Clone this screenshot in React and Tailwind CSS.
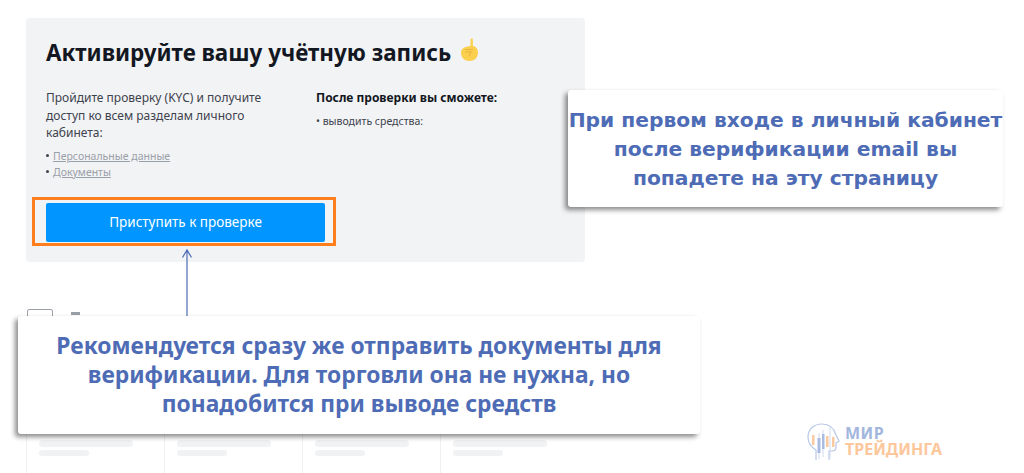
function Callout ({className, children}) {
	return (
		<div className={"absolute flex flex-col items-center justify-center whitespace-nowrap rounded-[3px] bg-white text-[#4e6cb5] font-bold shadow-[-3px_3px_5px_rgba(0,0,0,0.45)] " + className}>
			{children}
		</div>
	);
}

function PointingHand () {
	return (
		<svg width="19" height="24" viewBox="0 0 19 24" className="ml-[9px] mt-[-5px]">
			<path d="M10.500 1.500c0-1.500 2.400-1.500 2.400 0V8c3 .8 5.100 2.500 5.100 6.500 0 5-3.500 8.500-8.500 8.500S1 19.500 1 14.500C1 10.500 5 8.500 10.500 8z" fill="#fbd04f" />
			<path d="M5 11.500h8M5.500 14h6M11 13.500l-2 5" stroke="#e5a93a" strokeWidth="0.8" fill="none" />
		</svg>
	);
}

function Logo () {
	return (
		<div className="absolute left-[807px] top-[423px] flex items-center gap-[5px] font-['Noto_Sans',sans-serif]">
			<svg width="33" height="38" viewBox="0 0 33 38" fill="none">
				<path d="M9 37V27C4 24 1 20 1 14 1 6 7 1 15 1c7 0 12 4 14 11l3 6-3 2v5c0 2-2 3-5 3h-2v9" stroke="#b9c8e6" strokeWidth="1.200" />
				<path d="M12 10v26M16 7v27M23 4v31" stroke="#cfd9ee" strokeWidth="1" />
				<rect x="5" y="12" width="2.500" height="10" fill="#fbc9a0" />
				<rect x="10.500" y="15" width="3" height="15" fill="#a9bbe0" />
				<rect x="15" y="11" width="2.500" height="15" fill="#a9bbe0" />
				<rect x="19" y="13" width="2.500" height="11" fill="#fbc9a0" />
				<rect x="25" y="14" width="2.500" height="10" fill="#fbc9a0" />
			</svg>
			<div className="flex flex-col font-bold leading-[16px] mt-[-2px]">
				<span className="text-[16px] tracking-[0.5px] text-[#a3b6de]">МИР</span>
				<span className="text-[16px] text-[#fcc79c]">ТРЕЙДИНГА</span>
			</div>
		</div>
	);
}

function SkeletonCol () {
	return (
		<div className="w-[138px] h-[60px] border-l border-[#eef0f2] pl-[12px] pt-[6px]">
			<div className="w-[94px] h-[7px] rounded-full bg-[#f1f2f4]"></div>
			<div className="w-[50px] h-[6px] mt-[3px] rounded-full bg-[#f1f2f4]"></div>
		</div>
	);
}

export default function App () {
	return (
		<div className="relative w-[1024px] h-[473px] overflow-hidden bg-white pt-[18px] pl-[26px] font-['Noto_Sans',sans-serif] text-[#131722]">
			<section className="w-[559px] h-[244px] rounded-[4px] bg-[#f2f3f5] pl-[20px] pt-[18px]">
				<h1 className="flex items-center h-[33px] text-[22.400px] font-bold leading-[33px]">
					Активируйте вашу учётную запись
					<PointingHand />
				</h1>
				<div className="flex mt-[20px]">
					<div className="w-[270px]">
						<p className="w-[225px] text-[12px] leading-[17.500px] text-[#3d424d]">
							Пройдите проверку (KYC) и получите доступ ко всем разделам личного кабинета:
						</p>
						<ul className="mt-[6px] text-[10.500px] leading-[16px] text-[#9aa0a8]">
							<li className="flex items-center gap-[3px]"><span className="w-[3px] h-[3px] rounded-full bg-[#3d424d]"></span><span className="underline ml-[1px]">Персональные данные</span></li>
							<li className="flex items-center gap-[3px]"><span className="w-[3px] h-[3px] rounded-full bg-[#3d424d]"></span><span className="underline ml-[1px]">Документы</span></li>
						</ul>
					</div>
					<div>
						<h2 className="text-[12px] font-bold leading-[17.500px]">После проверки вы сможете:</h2>
						<p className="mt-[7px] text-[10.500px] leading-[15px] text-[#3d424d]">• выводить средства:</p>
					</div>
				</div>
				<div className="mt-[17px] ml-[-14px] w-[304px] h-[49px] border-[3px] border-[#ff7f1f] pl-[11px] pt-[3px]">
					<button className="w-[279px] h-[39px] rounded-[2px] bg-[#0095ff] text-[13.500px] text-white">Приступить к проверке</button>
				</div>
			</section>

			<div className="flex items-start gap-[18px] mt-[47px] ml-[1px]">
				<div className="w-[26px] h-[20px] rounded-[2px] border border-[#9aa0a8]"></div>
				<div className="w-[9px] h-[3px] mt-[3px] bg-[#9aa0a8]"></div>
			</div>

			<div className="absolute top-[434px] left-[26px] flex">
				<SkeletonCol />
				<SkeletonCol />
				<SkeletonCol />
				<SkeletonCol />
			</div>

			<svg width="12" height="70" viewBox="0 0 12 70" fill="none" className="absolute left-[181px] top-[248px]">
				<path d="M6 70V2M1.500 9.500 6 2l4.500 7.500" stroke="#4e6cb5" strokeWidth="1.200" />
			</svg>

			<Callout className="left-[568px] top-[90px] w-[435px] h-[117px] pt-[2px] text-[20.250px] leading-[29px] font-['DejaVu_Sans',sans-serif]">
				<span>При первом входе в личный кабинет</span>
				<span>после верификации email вы</span>
				<span>попадете на эту страницу</span>
			</Callout>

			<Callout className="left-[18px] top-[316px] w-[682px] h-[118px] pb-[2px] text-[22.800px] leading-[29px]">
				<span>Рекомендуется сразу же отправить документы для</span>
				<span>верификации. Для торговли она не нужна, но</span>
				<span>понадобится при выводе средств</span>
			</Callout>

			<Logo />
		</div>
	);
}
